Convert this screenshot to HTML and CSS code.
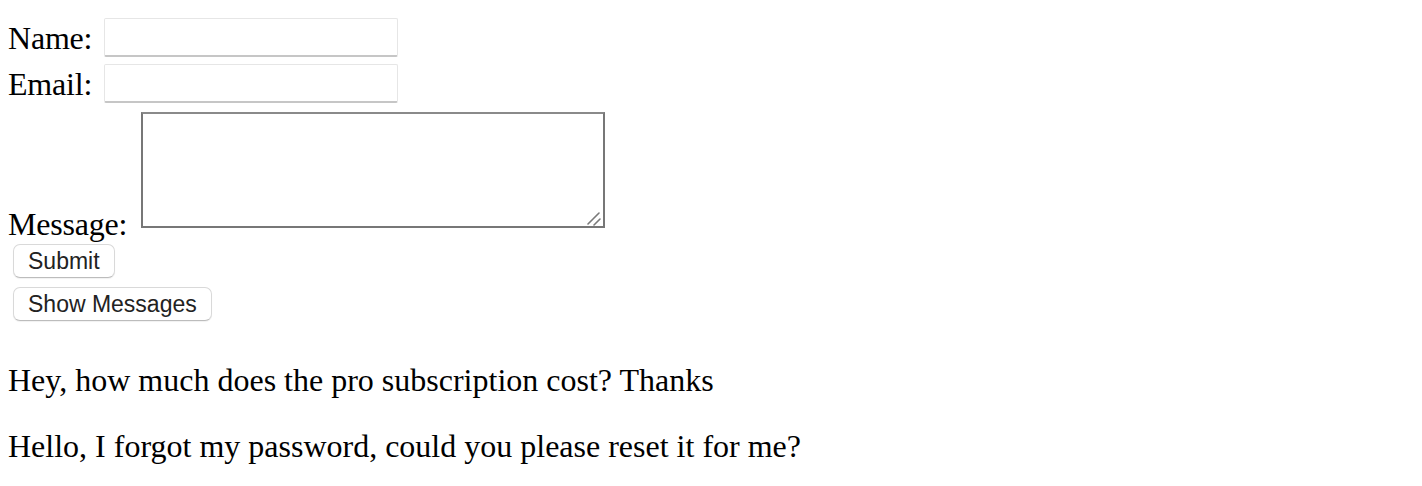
FILE: index.html
```html
<!DOCTYPE html>
<html>
<head>
<meta charset="utf-8">
<link rel="stylesheet" href="styles.css">
</head>
<body>
<form class="form">
  <div class="row"><label class="label">Name:</label><input class="field" type="text"></div>
  <div class="row"><label class="label">Email:</label><input class="field" type="text"></div>
  <div class="row row-msg">
    <label class="label label-msg">Message:</label>
    <span class="area-wrap">
      <textarea class="area"></textarea>
      <svg class="grip" width="16" height="16" viewBox="0 0 16 16" aria-hidden="true">
        <path d="M1 14 L12 3 M7 15 L13 9" stroke="#7a7a7a" stroke-width="1.6" stroke-linecap="round" fill="none"/>
      </svg>
    </span>
  </div>
  <div class="btn-row btn-first"><button class="btn" type="button">Submit</button></div>
  <div class="btn-row btn-second"><button class="btn" type="button">Show Messages</button></div>
</form>
<p class="msg">Hey, how much does the pro subscription cost? Thanks</p>
<p class="msg">Hello, I forgot my password, could you please reset it for me?</p>
</body>
</html>
```
FILE: styles.css
```css
body {
  margin: 8px;
  font-family: "Liberation Serif", "Times New Roman", serif;
  font-size: 32px;
  color: #000;
  background: #fff;
}
.form {
  margin: 0;
  padding-top: 10px;
  padding-bottom: 10px;
}
.row {
  display: flex;
  align-items: flex-end;
}
.row + .row { margin-top: 7px; }
.row-msg { margin-top: 9px !important; }
.label {
  line-height: 34px;
  margin-right: 12px;
  margin-bottom: 2px;
  letter-spacing: -0.2px;
}
.label-msg {
  margin-bottom: 0;
  margin-right: 14px;
}
.field {
  width: 294px;
  height: 39px;
  box-sizing: border-box;
  border: 1px solid #e6e6e6;
  border-bottom: 2px solid #c6c6c6;
  border-radius: 2px;
  margin: 0;
  padding: 0;
  background: #fff;
}
.area-wrap {
  position: relative;
  display: flex;
  margin-bottom: 13px;
}
.area {
  width: 464px;
  height: 116px;
  box-sizing: border-box;
  border: 2px solid #777;
  border-top-color: #8a8a8a;
  margin: 0;
  resize: none;
  padding: 0;
  background: #fff;
}
.grip {
  position: absolute;
  right: 2px;
  bottom: 2px;
}
.btn-row {
  display: flex;
  padding-left: 5px;
}
.btn-first { margin-top: 3px; }
.btn-second { margin-top: 9px; }
.btn {
  font-family: "Liberation Sans", Arial, sans-serif;
  font-size: 23px;
  color: #222;
  background: #fff;
  border: 1px solid #d9d9d9;
  border-bottom-color: #bcbcbc;
  border-radius: 7px;
  height: 34px;
  padding: 0 14px;
  margin: 0;
  box-shadow: 0 1px 1px rgba(0,0,0,0.06);
}
.msg {
  margin: 32px 0;
  line-height: 34px;
}
```
